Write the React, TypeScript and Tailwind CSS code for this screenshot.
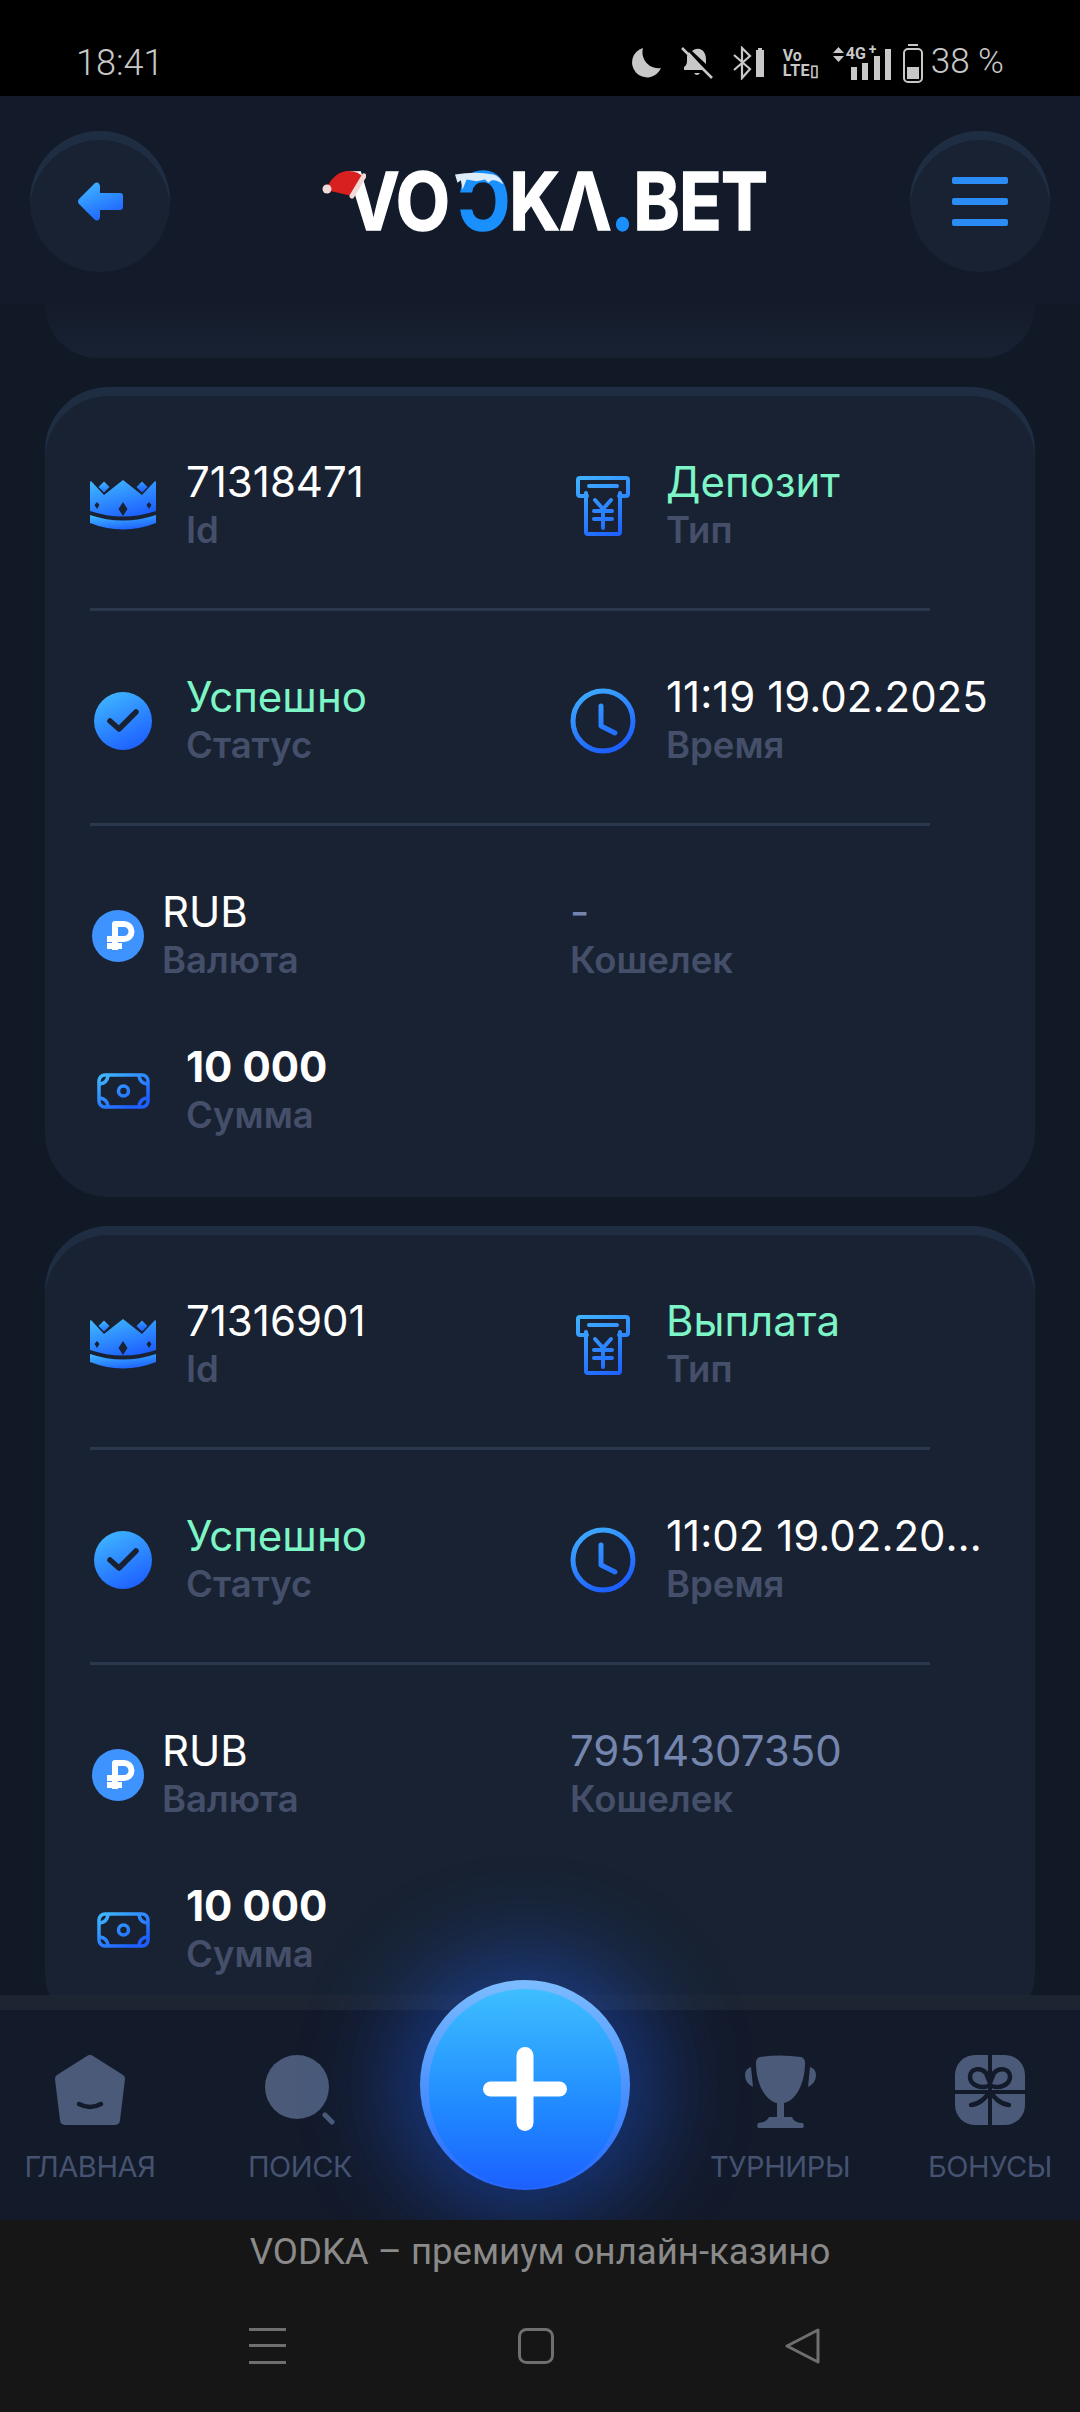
import type { ReactNode } from "react";

type Cell = { icon?: ReactNode; value: string; label: string; tone?: "white" | "green" | "muted"; bold?: boolean };

const Crown = () => (
  <svg width="66" height="52" viewBox="0 0 66 52" fill="url(#blue)">
    <path d="M1 1 L14 15 L33 0 L52 15 L65 1 Q66 1 66 3 V31 Q33 42 0 31 V3 Q0 1 1 1Z" />
    <path d="M14 1.5 L19.5 7 L14 12.5 L8.5 7Z M52 1.5 L57.5 7 L52 12.5 L46.5 7Z" />
    <path d="M0 35 Q33 46 66 35 V43 Q33 56 0 43Z" />
    <path d="M33 22 L37.5 29 L33 36 L28.5 29Z M7 22 L9.5 25 L7 29 L4.5 25Z M59 22 L61.5 25 L59 29 L56.5 25Z" fill="#182232" />
  </svg>
);

const Atm = () => (
  <svg width="54" height="60" viewBox="0 0 54 60" fill="none" stroke="url(#blueU)" strokeWidth="4" strokeLinecap="round" strokeLinejoin="round">
    <path d="M11 20 H4 Q2 20 2 18 V4 Q2 2 4 2 H50 Q52 2 52 4 V18 Q52 20 50 20 H43" />
    <path d="M10 17 V56 Q10 58 12 58 H42 Q44 58 44 56 V17" />
    <path d="M13 10 H41 M19 24 L27 33 L35 24 M18 35 H36 M18 43 H36 M27 33 V52" />
  </svg>
);

const Check = () => (
  <svg width="58" height="58" viewBox="0 0 58 58">
    <circle cx="29" cy="29" r="29" fill="url(#blue)" />
    <path d="M16 29 L25 37 L42 20" fill="none" stroke="#182232" strokeWidth="5.5" strokeLinecap="round" strokeLinejoin="round" />
  </svg>
);

const Clock = () => (
  <svg width="66" height="66" viewBox="0 0 66 66" fill="none" stroke="url(#blueU)" strokeWidth="5" strokeLinecap="round" strokeLinejoin="round">
    <circle cx="33" cy="33" r="30" />
    <path d="M31 18 V38 L45 45" />
  </svg>
);

const Ruble = () => (
  <svg width="52" height="52" viewBox="0 0 52 52" fill="none">
    <circle cx="26" cy="26" r="26" fill="#3f93ff" />
    <path d="M23 40 V14 H32 A7.5 7.5 0 0 1 32 29 H15 M15 36 H30" stroke="#fff" strokeWidth="6" strokeLinejoin="round" />
  </svg>
);

const Money = () => (
  <svg width="53" height="36" viewBox="0 0 53 36" fill="none" stroke="url(#blueM)" strokeWidth="3.5" strokeLinecap="round">
    <rect x="2" y="2" width="49" height="32" rx="6" />
    <circle cx="26.5" cy="18" r="5" />
    <path d="M3 11 Q10 10 11 3 M42 3 Q43 10 50 11 M3 25 Q10 26 11 33 M42 33 Q43 26 50 25" />
  </svg>
);

const firstCard: Cell[][] = [
  [
    { icon: <Crown />, value: "71318471", label: "Id" },
    { icon: <Atm />, value: "Депозит", label: "Тип", tone: "green" },
  ],
  [
    { icon: <Check />, value: "Успешно", label: "Статус", tone: "green" },
    { icon: <Clock />, value: "11:19 19.02.2025", label: "Время" },
  ],
];

const secondCard: Cell[][] = [
  [
    { icon: <Crown />, value: "71316901", label: "Id" },
    { icon: <Atm />, value: "Выплата", label: "Тип", tone: "green" },
  ],
  [
    { icon: <Check />, value: "Успешно", label: "Статус", tone: "green" },
    { icon: <Clock />, value: "11:02 19.02.2025", label: "Время" },
  ],
];

function Info({ value, label, tone = "white", bold }: Cell) {
  const color = tone === "green" ? "text-[#7df5c6]" : tone === "muted" ? "text-[#7486ad]" : "text-white";
  return (
    <div className="mb-[4px] min-w-0 flex-1">
      <div className={`h-[52px] truncate text-[42px] leading-[52px] ${color} ${bold ? "font-bold" : "font-normal"}`}>{value}</div>
      <div className="h-[44px] text-[36.5px] leading-[44px] font-semibold text-[#454f6a]">{label}</div>
    </div>
  );
}

function Row({ cells }: { cells: Cell[] }) {
  return (
    <div className="flex h-[96px]">
      {cells.map((cell) => (
        <div key={cell.label} className="flex w-[479px] items-center gap-[30px] first:pr-0 last:ml-[1px] last:w-[418px] last:flex-none">
          <div className="flex w-[66px] shrink-0 justify-center">{cell.icon}</div>
          <Info {...cell} />
        </div>
      ))}
    </div>
  );
}

function Card({ rows, wallet }: { rows: Cell[][]; wallet: string }) {
  return (
    <section className="mx-[45px] mt-[29px] rounded-[64px] bg-[#182232] pt-[71px] pb-[58px] pl-[45px] shadow-[inset_0_9px_0_#1f2d42]">
      <Row cells={rows[0]} />
      <div className="mt-[54px] mb-[62px] h-[3px] w-[840px] bg-[#2a374d]" />
      <Row cells={rows[1]} />
      <div className="mt-[54px] mb-[62px] h-[3px] w-[840px] bg-[#2a374d]" />
      <div className="flex h-[96px] items-center">
        <div className="flex w-[480px] items-center gap-[18px] pl-[2px]">
          <Ruble />
          <Info value="RUB" label="Валюта" />
        </div>
        <div className="flex w-[400px]">
          <Info value={wallet} label="Кошелек" tone="muted" />
        </div>
      </div>
      <div className="mt-[59px] flex h-[96px] items-center gap-[30px]">
        <div className="flex w-[66px] shrink-0 justify-center">
          <Money />
        </div>
        <Info value="10 000" label="Сумма" bold />
      </div>
    </section>
  );
}

function StatusBar() {
  return (
    <header className="flex h-[96px] shrink-0 items-center justify-between bg-black pt-[29px] pr-[76px] pl-[76px] font-['Roboto',sans-serif] text-[35px] text-[#c8c8c8]">
      <span className="text-[36px] font-light">18:41</span>
      <div className="flex items-center">
        <svg width="32" height="30" viewBox="0 0 32 30" fill="#c8c8c8">
          <path d="M14 0 A15 15 0 1 0 32 20 A16 16 0 0 1 14 0Z" />
        </svg>
        <svg className="ml-[20px]" width="32" height="32" viewBox="0 0 32 32" fill="#c8c8c8">
          <path d="M8 5 L24 23 H3 V20 Q6 18 6 14 V9 Z M11 4 Q16 0 21 3 Q25 6 25 13 V17 Z M13 26 H19 Q16 30 13 26Z" />
          <path d="M1 1 L31 31" stroke="#c8c8c8" strokeWidth="2.5" />
        </svg>
        <svg className="ml-[20px]" width="34" height="34" viewBox="0 0 34 34" fill="none">
          <path d="M1 9 L17 23 L9 32 V2 L17 10 L1 24" stroke="#c8c8c8" strokeWidth="2.2" />
          <path d="M23 4 H31 V31 H23 Z M25 2 H29 V4 H25Z" fill="#c8c8c8" />
        </svg>
        <div className="ml-[16px] flex w-[36px] flex-col font-['Roboto',sans-serif] text-[16px] leading-[15px] font-bold">
          <span>Vo</span>
          <span className="tracking-[0.5px]">LTE▯</span>
        </div>
        <div className="relative ml-[14px] h-[34px] w-[60px]">
          <svg className="absolute top-0 left-0" width="60" height="34" viewBox="0 0 60 34" fill="#c8c8c8">
            <path d="M0 7 L5.5 1 L11 7Z M0 10 L5.5 16 L11 10Z" />
            <rect x="18" y="21" width="6" height="13" />
            <rect x="29" y="17" width="6" height="17" />
            <rect x="41" y="10" width="6" height="24" />
            <rect x="52" y="3" width="6" height="31" />
          </svg>
          <span className="absolute top-[-1px] left-[13px] text-[16px] leading-[18px] font-bold">4G</span>
          <span className="absolute top-[-5px] left-[36px] text-[14px] leading-[16px] font-bold">+</span>
        </div>
        <svg className="ml-[10px]" width="20" height="40" viewBox="0 0 20 40" fill="none">
          <rect x="1" y="6" width="18" height="33" rx="4" stroke="#c8c8c8" strokeWidth="2" />
          <rect x="5" y="1" width="10" height="2" fill="#c8c8c8" />
          <rect x="4" y="24" width="12" height="12" fill="#c8c8c8" />
        </svg>
        <span className="ml-[8px] font-light">38 %</span>
      </div>
    </header>
  );
}

function Logo() {
  return (
    <div className="relative h-[62px] w-[446px] pl-[30px] font-['Inter',sans-serif] text-[80px] leading-[62px] font-bold text-white [-webkit-text-stroke:1.5px_white]">
      <div className="flex w-[490px] origin-left scale-x-[0.88] tracking-[-1px]">
        <span>VO</span>
        <span className="ml-[10px] text-[#1a90ff] [-webkit-text-stroke:1.5px_#1a90ff]">Ɔ</span>
        <span>KΛ</span>
        <span className="text-[#1a90ff] [-webkit-text-stroke:1.5px_#1a90ff]">.</span>
        <span>BET</span>
      </div>
      <svg className="absolute top-0 left-[5px]" width="44" height="32" viewBox="0 0 44 32">
        <path d="M4 20 Q10 4 24 1 Q36 0 42 8 L30 26 Z" fill="#d8201f" />
        <path d="M30 26 L42 6" stroke="#f1d9d9" strokeWidth="5" strokeLinecap="round" />
        <circle cx="5" cy="19" r="4.5" fill="#f1d9d9" />
      </svg>
      <svg className="absolute top-[2px] left-[138px]" width="50" height="20" viewBox="0 0 60 22" fill="#dcecfa">
        <path d="M0 2 Q24 -2 46 2 Q54 4 58 14 Q50 8 44 9 L40 12 L36 8 L26 10 L14 8 L9 20 L7 9 L3 12Z" />
      </svg>
    </div>
  );
}

function TopBar() {
  const btn = "flex h-[141px] w-[140px] items-center justify-center rounded-full bg-[#182232] shadow-[inset_0_9px_0_#1f2d42]";
  return (
    <div className="flex h-[209px] shrink-0 items-start justify-between bg-[#131a2a] px-[30px] pt-[35px]">
      <button type="button" className={btn}>
        <svg width="45" height="39" viewBox="0 0 45 39" fill="url(#blue)">
          <path d="M1 17 L17 1 Q21 -1 22 4 V11 H42 Q45 11 45 14 V25 Q45 28 42 28 H22 V35 Q21 40 17 38 L1 22 Q-1 19.5 1 17Z" />
        </svg>
      </button>
      <div className="mt-[39px]">
        <Logo />
      </div>
      <button type="button" className={`${btn} flex-col gap-[14px]`}>
        <span className="h-[7px] w-[56px] rounded-[2px] bg-[#2b8cf5]" />
        <span className="h-[7px] w-[56px] rounded-[2px] bg-[#2b8cf5]" />
        <span className="h-[7px] w-[56px] rounded-[2px] bg-[#2b8cf5]" />
      </button>
    </div>
  );
}

const navIcons = {
  home: (
    <svg width="70" height="70" viewBox="0 0 70 70">
      <path d="M35 5 L65 24 L60 65 H10 L5 24 Z" fill="#4a5a78" stroke="#4a5a78" strokeWidth="10" strokeLinejoin="round" />
      <path d="M24 49 Q35 55 46 49" fill="none" stroke="#131a2a" strokeWidth="4.5" strokeLinecap="round" />
    </svg>
  ),
  search: (
    <svg width="70" height="70" viewBox="0 0 70 70">
      <circle cx="32" cy="32" r="32" fill="#4a5a78" />
      <path d="M60 60 L67 67" stroke="#4a5a78" strokeWidth="5" strokeLinecap="round" />
    </svg>
  ),
  trophy: (
    <svg width="71" height="73" viewBox="0 0 71 73" fill="#4a5a78">
      <path d="M15 2 Q35 -1 56 2 Q60 3 60 8 C60 30 50 46 39 48 V62 H47 Q49 68 58 68 Q60 73 57 73 H14 Q11 73 13 68 Q21 68 24 62 H32 V48 C21 46 11 30 11 8 Q11 3 15 2Z" />
      <path d="M6 12 Q0 14 0 20 Q0 28 8 32 Z M65 12 Q71 14 71 20 Q71 28 63 32 Z" />
    </svg>
  ),
  gift: (
    <svg width="70" height="70" viewBox="0 0 70 70" fill="none">
      <rect width="70" height="70" rx="20" fill="#4a5a78" />
      <path d="M35 0 V70 M0 37 H70" stroke="#131a2a" strokeWidth="4" />
      <path d="M33 31 C26 34 15 30 15 22 C15 13 26 12 31 18 L35 28 L39 18 C44 12 55 13 55 22 C55 30 44 34 37 31 M35 37 C30 43 25 49 16 50 M35 37 C40 43 45 49 54 50" stroke="#131a2a" strokeWidth="4.5" strokeLinecap="round" />
    </svg>
  ),
};

function NavItem({ icon, label, width }: { icon: ReactNode; label: string; width: string }) {
  return (
    <div className={`flex flex-col items-center ${width}`}>
      <div className="flex h-[73px] w-full items-start justify-center">{icon}</div>
      <span className="mt-[21px] text-[29px] leading-[36px] tracking-[-0.4px] text-[#455270]">{label}</span>
    </div>
  );
}

function BottomNav() {
  return (
    <nav className="relative z-10 shrink-0">
      <div className="h-[15px] bg-[#1d2533]" />
      <div className="flex h-[210px] items-start bg-[#131a2a] pt-[45px]">
        <NavItem icon={navIcons.home} label="ГЛАВНАЯ" width="w-[180px]" />
        <NavItem icon={navIcons.search} label="ПОИСК" width="w-[240px]" />
        <div className="w-[210px]" />
        <NavItem icon={navIcons.trophy} label="ТУРНИРЫ" width="w-[300px]" />
        <NavItem icon={navIcons.gift} label="БОНУСЫ" width="w-[120px]" />
      </div>
      <button
        type="button"
        className="absolute top-[-15px] left-[420px] flex h-[210px] w-[210px] rounded-full bg-gradient-to-b from-[#7cbcff] to-[#2266ff] px-[9px] pt-[9px] pb-[2px] shadow-[0_0_90px_30px_rgba(30,95,240,0.42)]"
      >
        <span className="relative flex h-full w-full items-center justify-center rounded-full bg-gradient-to-b from-[#3fbeff] to-[#1e60ff]">
          <svg width="84" height="84" viewBox="0 0 84 84" fill="#fff">
            <rect x="33.5" width="17" height="84" rx="8.5" />
            <rect y="34.5" width="84" height="15" rx="7.5" />
          </svg>
        </span>
      </button>
    </nav>
  );
}

function SystemFooter() {
  return (
    <footer className="relative z-20 h-[192px] shrink-0 bg-[#161616] font-['Roboto',sans-serif]">
      <p className="pt-[10px] text-center text-[36.6px] leading-[43px] text-[#8a8a8a]">VODKA – премиум онлайн-казино</p>
      <div className="mt-[55px] flex items-start">
        <svg className="ml-[249px]" width="37" height="36" viewBox="0 0 37 36" fill="#6f6f6f">
          <rect width="37" height="3" />
          <rect y="16" width="37" height="3" />
          <rect y="33" width="37" height="3" />
        </svg>
        <svg className="ml-[232px]" width="36" height="36" viewBox="0 0 36 36" fill="none" stroke="#6f6f6f" strokeWidth="3">
          <rect x="1.5" y="1.5" width="33" height="33" rx="7" />
        </svg>
        <svg className="ml-[231px]" width="35" height="36" viewBox="0 0 35 36" fill="none" stroke="#6f6f6f" strokeWidth="3" strokeLinejoin="round">
          <path d="M33 2 V34 L2 18 Z" />
        </svg>
      </div>
    </footer>
  );
}

export default function App() {
  return (
    <div className="flex h-[2412px] w-[1080px] flex-col overflow-hidden bg-[#111826] font-['Inter',sans-serif]">
      <svg className="absolute h-0 w-0">
        <defs>
          <linearGradient id="blue" x1="0.2" y1="0" x2="0.7" y2="1">
            <stop offset="0" stopColor="#3fb6ff" />
            <stop offset="1" stopColor="#1d5fff" />
          </linearGradient>
          <linearGradient id="blueU" gradientUnits="userSpaceOnUse" x1="10" y1="0" x2="40" y2="62">
            <stop offset="0" stopColor="#3fb0ff" />
            <stop offset="1" stopColor="#1d5fff" />
          </linearGradient>
          <linearGradient id="blueM" gradientUnits="userSpaceOnUse" x1="10" y1="0" x2="30" y2="36">
            <stop offset="0" stopColor="#3fb6ff" />
            <stop offset="1" stopColor="#1d5fff" />
          </linearGradient>
        </defs>
      </svg>
      <StatusBar />
      <TopBar />
      <main className="min-h-0 flex-1 overflow-hidden">
        <div className="mx-[45px] h-[53px] rounded-b-[64px] bg-gradient-to-b from-[#141b2b] to-[#182232]" />
        <Card rows={firstCard} wallet="-" />
        <Card rows={secondCard} wallet="79514307350" />
      </main>
      <BottomNav />
      <SystemFooter />
    </div>
  );
}
